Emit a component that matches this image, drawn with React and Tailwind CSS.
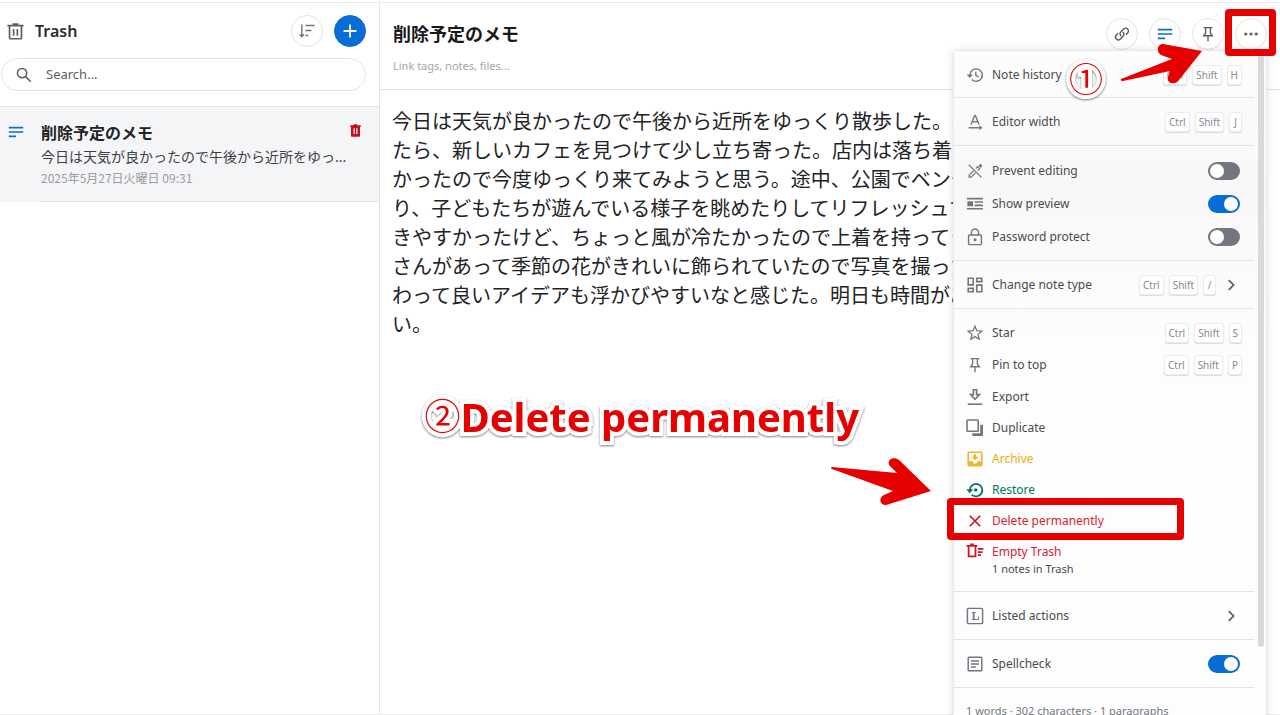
import React, { useState } from 'react';

const NOTE_LINES = [
    '今日は天気が良かったので午後から近所をゆっくり散歩した。普',
    'たら、新しいカフェを見つけて少し立ち寄った。店内は落ち着い',
    'かったので今度ゆっくり来てみようと思う。途中、公園でベンチ',
    'り、子どもたちが遊んでいる様子を眺めたりしてリフレッシュで',
    'きやすかったけど、ちょっと風が冷たかったので上着を持ってき',
    'さんがあって季節の花がきれいに飾られていたので写真を撮った',
    'わって良いアイデアも浮かびやすいなと感じた。明日も時間があ',
    'い。',
];

const outline = { fill: 'none', stroke: 'currentColor', strokeWidth: 1.8 };

const ICONS = {
    trash: (
        <g {...outline} strokeWidth="2">
            <path d="M.5 3.2h19M6.5 1.4h7" />
            <path d="M3 3.5v13.8q0 1.2 1.2 1.2h11.6q1.2 0 1.2-1.2V3.5M7.8 7v8M12.2 7v8" />
        </g>
    ),
    trashFilled: (
        <path
            fillRule="evenodd"
            fill="currentColor"
            d="M2 2h5l1-1.5h4L13 2h5v2.5h-1V18a1.5 1.5 0 0 1-1.5 1.5h-11A1.5 1.5 0 0 1 3 18V4.5H2zM7 6.5v9h2v-9zM11 6.5v9h2v-9z"
        />
    ),
    sort: (
        <g {...outline}>
            <path d="M3.5 2v15M.8 14.2l2.7 2.9 2.7-2.9" />
            <path d="M8 3.2h11.5M8 9.4h7.5M8 15.6h3.5" />
        </g>
    ),
    plus: <path {...outline} strokeWidth="2.2" d="M10 2v16M2 10h16" />,
    search: (
        <g {...outline} strokeWidth="2">
            <circle cx="7.6" cy="7.6" r="5.8" />
            <path d="m12 12 6.5 6.5" />
        </g>
    ),
    text: <path {...outline} strokeWidth="2" d="M1 4.5h18M1 10h18M1 15.5h9" />,
    link: (
        <g {...outline} strokeLinecap="round">
            <path d="M8.6 12.2a3.5 3.5 0 0 1 0-5L12 3.7a3.5 3.5 0 0 1 5 5l-1.6 1.6" />
            <path d="M11.4 7.8a3.5 3.5 0 0 1 0 5L8 16.3a3.5 3.5 0 0 1-5-5l1.6-1.6" />
        </g>
    ),
    pin: (
        <g {...outline} strokeWidth="1.7">
            <path d="M4.500 2h11M7 2v7l-2.500 3.200h11L13 9V2M10 12.200v7" />
        </g>
    ),
    more: (
        <g fill="currentColor">
            <circle cx="3.500" cy="10" r="2" />
            <circle cx="10" cy="10" r="2" />
            <circle cx="16.500" cy="10" r="2" />
        </g>
    ),
    history: (
        <g {...outline}>
            <path d="M3.6 10.2a7.8 7.8 0 1 1 2.3 5.5" />
            <path fill="currentColor" stroke="none" d="M-.4 9.500h7.800l-3.900 4.300z" />
            <path d="M11 5.800v4.600l3.500 2.100" />
        </g>
    ),
    width: (
        <g {...outline}>
            <path d="M5 13.2 9.500 2h1L15 13.2M6.500 9.800h7" />
            <path d="M2 17.200h15" />
            <path fill="currentColor" stroke="none" d="m15.500 14 3.800 3.200-3.800 3.200z" />
        </g>
    ),
    pencilOff: (
        <g {...outline} strokeWidth="1.6">
            <path d="m2 2 16 16" />
            <path d="m8.3 9.5-5.6 5.6v2.5h2.5l5.6-5.6M11 6.8l2.3-2.3 2.5 2.5-2.3 2.3" />
            <path fill="currentColor" stroke="none" d="m14.4 3.4 1.9-1.8q.5-.4 1 0l1.7 1.7q.4.5 0 1L17.2 6z" />
        </g>
    ),
    preview: (
        <path
            fill="currentColor"
            d="M0 2.300h20v2H0zM9.500 6.500H20v2H9.500zM9.500 10.700H20v2H9.500zM0 15h20v2H0zM.5 6.500h7v6.200h-7z"
        />
    ),
    lock: (
        <g {...outline}>
            <rect x="2" y="7.500" width="16" height="12" rx="1" />
            <path d="M5.600 7.500V4.400a4.400 4.400 0 0 1 8.800 0v3.100" />
            <circle cx="10" cy="13.500" r="1.900" fill="currentColor" stroke="none" />
        </g>
    ),
    dashboard: (
        <g {...outline} strokeWidth="2">
            <path d="M1.500 1.500h6.300v8.300H1.500zM12.200 1.500h6.300v4.300h-6.300zM12.200 10.200h6.300v8.300h-6.300zM1.500 14.200h6.300v4.300H1.500z" />
        </g>
    ),
    star: (
        <path
            {...outline}
            strokeWidth="1.6"
            d="m10 1.500 2.300 5.700 6.200.5-4.700 4 1.500 6.100-5.300-3.300-5.300 3.300 1.500-6.100-4.700-4 6.200-.5z"
        />
    ),
    download: (
        <g {...outline} strokeWidth="2">
            <path d="M8 1h4v6h3.500L10 12.800 4.500 7H8z" />
            <path d="M1 19h18" />
        </g>
    ),
    copy: (
        <g>
            <rect x="0" y="0" width="14" height="14" rx="1" {...outline} strokeWidth="2" />
            <path fill="currentColor" d="M16.500 6H19a1 1 0 0 1 1 1v11.500q0 1.500-1.500 1.500H7.500a1 1 0 0 1-1-1v-2.500h10z" />
        </g>
    ),
    archive: (
        <path
            fillRule="evenodd"
            fill="currentColor"
            d="M2.500.5h15a2 2 0 0 1 2 2v15a2 2 0 0 1-2 2h-15a2 2 0 0 1-2-2v-15a2 2 0 0 1 2-2zM2.500 2.500v10.300H7a3 3 0 0 0 6 0h4.500V2.500zM8.500 4h3v3.300h2.700L10 11.500 5.800 7.300h2.700z"
        />
    ),
    restore: (
        <g {...outline} strokeWidth="2.2">
            <path d="M3.600 10.200a7.800 7.800 0 1 1 2.300 5.500" />
            <path fill="currentColor" stroke="none" d="M-1 9.200h9l-4.500 5z" />
            <circle cx="11" cy="10" r="2.200" fill="currentColor" stroke="none" />
        </g>
    ),
    close: <path {...outline} strokeWidth="2" d="m3.500 3.500 13 13M16.500 3.500l-13 13" />,
    trashSweep: (
        <g {...outline} strokeWidth="2.2">
            <path d="M-.5 3.600H13M4 1.800h4.500M2 4v12.600h8.600V4" />
            <path d="M13.500 7.300h7M13.500 11.300h6M13.500 15.300h4" />
        </g>
    ),
    listed: (
        <g>
            <rect x="0.500" y="0.500" width="19" height="19" rx="1.500" {...outline} />
            <path {...outline} strokeWidth="1.200" d="M6 5.600h5M6 14.400h8.400v-3.600" />
            <path {...outline} strokeWidth="2.200" d="M8.400 5.600v8.800" />
        </g>
    ),
    notes: (
        <g {...outline}>
            <rect x="1.500" y="1.500" width="17" height="17" rx="1" />
            <path d="M5 6.200h10M5 10h10M5 13.800h6" />
        </g>
    ),
    chevron: <path {...outline} strokeWidth="2.200" d="m6 4 6 6-6 6" />,
};

function Icon({ name, className }) {
    return (
        <svg viewBox="0 0 20 20" aria-hidden="true" className={`shrink-0 overflow-visible ${className}`}>
            {ICONS[name]}
        </svg>
    );
}

function RoundButton({ icon, label, className }) {
    return (
        <button
            aria-label={label}
            className={`flex size-8 items-center justify-center rounded-full border ${className}`}
        >
            <Icon name={icon} className="size-4" />
        </button>
    );
}

function Keys({ keys }) {
    return (
        <span className="ml-auto flex gap-[5px]">
            {keys.map((key) => (
                <kbd
                    key={key}
                    className="min-w-[13px] rounded-[3px] border border-[#ececee] bg-white px-[3px] text-center font-[inherit] text-[10px] leading-[18px] text-[#86898f] shadow-[0_1px_1px_#d9dade]"
                >
                    {key}
                </kbd>
            ))}
        </span>
    );
}

function MenuItem({ icon, label, keys, arrow, color = 'text-[#4a4b4e]', iconColor = 'text-[#72767e]' }) {
    return (
        <button className={`flex w-full items-center gap-2 pr-3 pl-3 ${color} ${keys || arrow ? 'h-8' : 'h-[31px]'}`}>
            <Icon name={icon} className={`mx-px size-4 ${iconColor}`} />
            <span>{label}</span>
            {keys && <Keys keys={keys} />}
            {arrow && <Icon name="chevron" className={`mr-0.5 size-4 text-[#5c5f66] ${keys ? '' : 'ml-auto'}`} />}
        </button>
    );
}

function MenuSwitch({ icon, label, initial, className }) {
    const [on, setOn] = useState(initial);

    return (
        <label className={`flex items-center gap-2 pr-3.5 pl-3 text-[#4a4b4e] ${className}`}>
            <Icon name={icon} className="mx-px size-4 text-[#72767e]" />
            <span>{label}</span>
            <input
                type="checkbox"
                role="switch"
                checked={on}
                onChange={() => setOn(!on)}
                className="ml-auto h-[18px] w-8 appearance-none rounded-full bg-[#72767e] p-0.5 before:block before:size-3.5 before:rounded-full before:bg-white checked:bg-[#086dd6] checked:before:ml-3.5"
            />
        </label>
    );
}

function Section({ children }) {
    return <div className="border-b border-[#e3e3e5] pt-2 pb-[7px]">{children}</div>;
}

function NoteMenu() {
    return (
        <div className="absolute top-[47px] right-[13px] flex w-[314px] rounded border border-[#e8e8ea] bg-linear-to-b from-[#fdfdfd] via-[#f8f8f8] via-20% to-[#fdfdfd] to-40% pb-8 text-xs shadow-[0_0_8px_rgba(0,0,0,0.12)]">
            <div className="min-w-0 flex-1">
                <div className="border-b border-[#e3e3e5] pt-2 pb-1.5">
                    <MenuItem icon="history" label="Note history" keys={['Ctrl', 'Shift', 'H']} />
                </div>
                <Section>
                    <MenuItem icon="width" label="Editor width" keys={['Ctrl', 'Shift', 'J']} />
                </Section>
                <Section>
                    <MenuSwitch icon="pencilOff" label="Prevent editing" initial={false} className="h-[33px]" />
                    <MenuSwitch icon="preview" label="Show preview" initial={true} className="h-[33px]" />
                    <MenuSwitch icon="lock" label="Password protect" initial={false} className="h-[33px]" />
                </Section>
                <Section>
                    <MenuItem icon="dashboard" label="Change note type" keys={['Ctrl', 'Shift', '/']} arrow />
                </Section>
                <Section>
                    <MenuItem icon="star" label="Star" keys={['Ctrl', 'Shift', 'S']} />
                    <MenuItem icon="pin" label="Pin to top" keys={['Ctrl', 'Shift', 'P']} />
                    <MenuItem icon="download" label="Export" />
                    <MenuItem icon="copy" label="Duplicate" />
                    <MenuItem icon="archive" label="Archive" color="text-[#ebad00]" iconColor="text-[#efb52c]" />
                    <MenuItem icon="restore" label="Restore" color="text-[#007662]" iconColor="text-[#007662]" />
                    <MenuItem icon="close" label="Delete permanently" color="text-[#d9222f]" iconColor="text-[#cc0e1b]" />
                    <button className="flex w-full items-start gap-2 py-[7px] pl-3 text-left leading-[17px]">
                        <Icon name="trashSweep" className="mx-px size-4 text-[#cc1620]" />
                        <span>
                            <span className="block text-[#d9222f]">Empty Trash</span>
                            <span className="block text-[11px] leading-[17px] text-[#4a4b4e]">1 notes in Trash</span>
                        </span>
                    </button>
                </Section>
                <Section>
                    <MenuItem icon="listed" label="Listed actions" arrow />
                </Section>
                <Section>
                    <MenuSwitch icon="notes" label="Spellcheck" initial={true} className="h-8" />
                </Section>
                <p className="px-3 pt-[15px] text-[11px] leading-4 text-[#72767e]">
                    1 words · 302 characters · 1 paragraphs
                </p>
            </div>
            <div className="w-3 shrink-0 pl-1">
                <div className="h-[596px] w-1.5 rounded-b-full bg-[#d9d9db]" />
            </div>
        </div>
    );
}

function Sidebar() {
    return (
        <aside className="w-[380px] shrink-0 border-r border-[#e3e3e5]">
            <div className="border-b border-[#e3e3e5] pt-3 pb-[15px]">
                <div className="flex items-center gap-[11px] pr-[13px] pl-[7px]">
                    <Icon name="trash" className="size-[17px] text-[#5c5f66]" />
                    <h1 className="mr-auto text-base font-semibold text-[#2c2d30]">Trash</h1>
                    <RoundButton icon="sort" label="Sort" className="border-[#e3e3e5] text-[#72767e]" />
                    <RoundButton icon="plus" label="New note" className="border-[#086dd6] bg-[#086dd6] text-white" />
                </div>
                <label className="mt-[11px] mr-[13px] ml-px flex h-[33px] items-center gap-3.5 rounded-full border border-[#e3e3e5] pl-3.5">
                    <Icon name="search" className="size-4 text-[#5c5f66]" />
                    <input
                        type="search"
                        aria-label="Search"
                        placeholder="Search..."
                        className="min-w-0 flex-1 text-[13px] outline-none placeholder:text-[#5c5f66]"
                    />
                </label>
            </div>
            <article className="flex bg-[#f4f5f7]">
                <Icon name="text" className="mt-[17px] ml-2 size-4 text-[#086dd6]" />
                <div className="ml-[17px] min-w-0 flex-1 border-b border-[#e3e3e5] py-3.5">
                    <div className="flex items-start">
                        <h2 className="flex-1 text-base leading-6 font-bold text-[#222326]">削除予定のメモ</h2>
                        <Icon name="trashFilled" className="mt-[3px] mr-[17px] size-[13px] text-[#cc0e1b]" />
                    </div>
                    <p className="text-sm leading-6 whitespace-nowrap text-[#3f4043]">
                        今日は天気が良かったので午後から近所をゆっ...
                    </p>
                    <time className="block font-['Noto_Sans_CJK_JP',sans-serif] text-xs leading-[18px] text-[#9a9ca1]">
                        2025年5月27日火曜日 09:31
                    </time>
                </div>
            </article>
        </aside>
    );
}

function Editor() {
    return (
        <main className="relative flex min-w-0 flex-1 flex-col">
            <header className="border-b border-[#e3e3e5] pt-[15px] pr-[13px] pb-3.5 pl-[13px]">
                <div className="flex items-center gap-[11px]">
                    <input
                        aria-label="Title"
                        defaultValue="削除予定のメモ"
                        className="min-w-0 flex-1 text-lg leading-8 font-bold text-[#19191c] outline-none"
                    />
                    <RoundButton icon="link" label="Link" className="border-[#e3e3e5] text-[#5c5f66]" />
                    <RoundButton icon="text" label="Note type" className="border-[#e3e3e5] text-[#086dd6]" />
                    <RoundButton icon="pin" label="Pin" className="border-[#e3e3e5] text-[#5c5f66]" />
                    <RoundButton icon="more" label="Note options" className="border-[#e3e3e5] text-[#5c5f66]" />
                </div>
                <input
                    aria-label="Links"
                    placeholder="Link tags, notes, files..."
                    className="mt-[7px] block w-full text-[11px] leading-[18px] outline-none placeholder:text-[#a4a6ab]"
                />
            </header>
            <textarea
                aria-label="Note"
                wrap="off"
                defaultValue={NOTE_LINES.join('\n')}
                className="w-full flex-1 resize-none overflow-hidden pt-[17px] pl-3 text-xl leading-[29px] whitespace-pre text-[#222326] outline-none"
            />
            <NoteMenu />
        </main>
    );
}

const callout =
    'absolute whitespace-nowrap text-[#e60000] [-webkit-text-stroke:8px_white] [paint-order:stroke_fill] drop-shadow-[0_1px_1px_rgba(0,0,0,0.5)]';

function Annotations() {
    return (
        <div className="pointer-events-none absolute inset-0">
            <div className="absolute top-[9px] right-1 h-[47px] w-[51px] rounded-sm border-[7px] border-[#e60000]" />
            <div className="absolute top-[498px] right-24 h-[42px] w-[237px] rounded-sm border-[7px] border-[#e60000]" />
            <span className={`${callout} top-[53px] right-[177px] text-[34px] leading-[52px]`}>①</span>
            <p className={`${callout} top-[391px] right-[421px] flex items-center text-[40px] leading-[52px] font-bold`}>
                <span className="text-[36px] font-normal">②</span>
                Delete permanently
            </p>
            <svg viewBox="0 0 84 42" className="absolute top-[43px] right-[77px] h-[42px] w-[84px]">
                <path
                    d="M2 36 53 16 42 12C37 9 38 1 44 1L83 8 60 37C56 43 47 40 49 34L51 28 4 38Q1 38 2 36z"
                    fill="#e60000"
                />
            </svg>
            <svg viewBox="0 0 102 50" className="absolute top-[457px] right-[348px] h-[50px] w-[102px]">
                <path
                    d="M2 10 67 16 59 8C57 2 64-1 69 3L101 34 56 48C50 49 48 41 54 38L63 34 2 12Q0 11 2 10z"
                    fill="#e60000"
                />
            </svg>
        </div>
    );
}

export default function App() {
    return (
        <div className="h-screen overflow-hidden bg-white pt-0.5 font-['Noto_Sans','Noto_Sans_CJK_JP',sans-serif]">
            <div className="relative flex h-full border-y border-[#ebebed]">
                <Sidebar />
                <Editor />
            </div>
            <Annotations />
        </div>
    );
}
